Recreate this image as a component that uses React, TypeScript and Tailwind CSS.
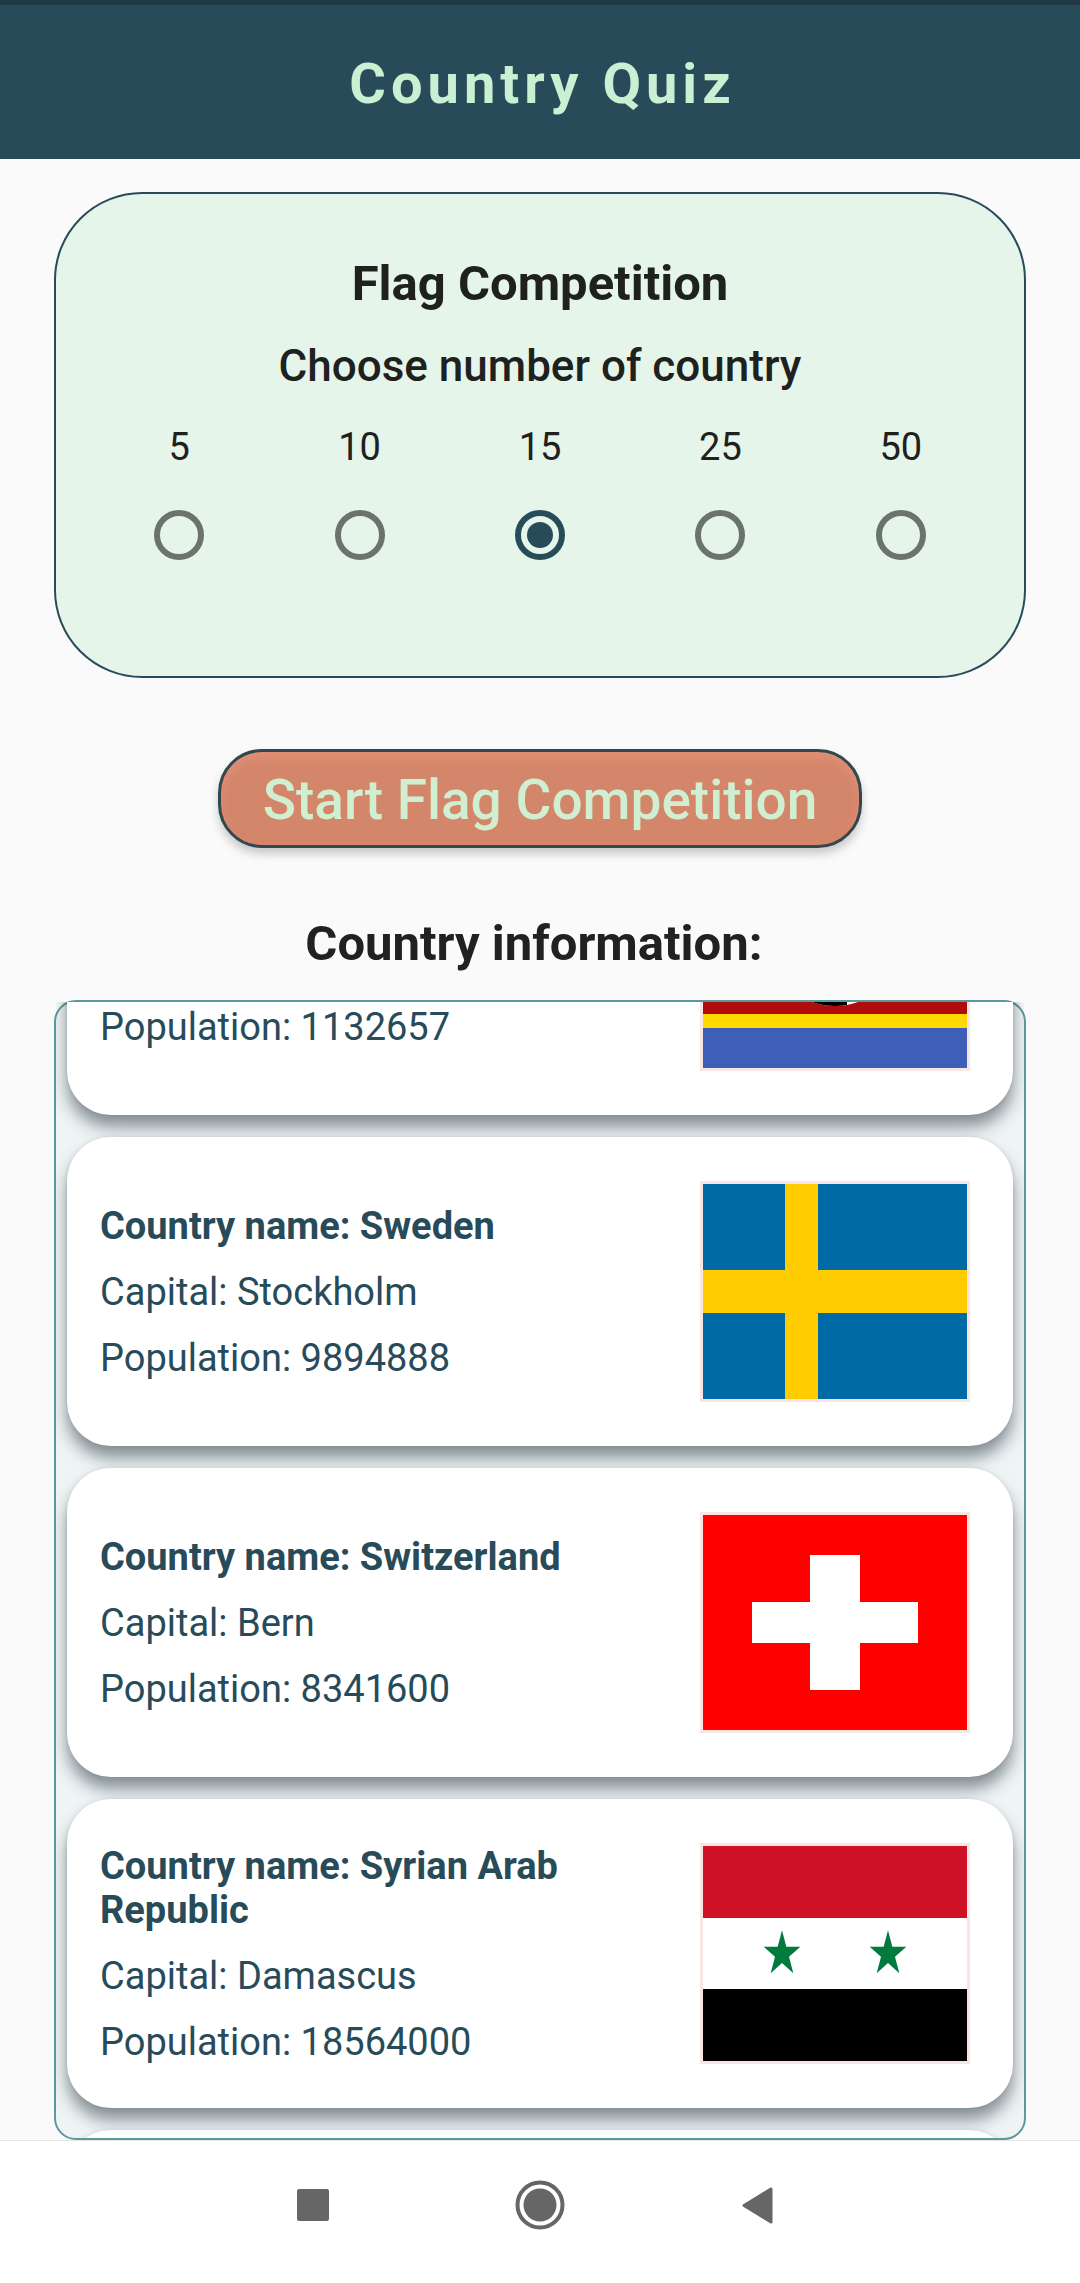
import { useLayoutEffect, useRef, useState, type ReactNode } from "react";

const COUNTS = [5, 10, 15, 25, 50];

type Country = { name: string; capital: string; population: number; flag: ReactNode };

// Five-pointed star stretched to the given horizontal and vertical radii.
function starPoints(cx: number, cy: number, rx: number, ry: number) {
  return Array.from({ length: 10 }, (_, i) => {
    const k = i % 2 === 0 ? 1 : 0.382;
    const a = (Math.PI / 5) * i;
    return `${(cx + Math.sin(a) * rx * k).toFixed(2)},${(cy - Math.cos(a) * ry * k).toFixed(2)}`;
  }).join(" ");
}

const COUNTRIES: Country[] = [
  {
    name: "Swaziland",
    capital: "Mbabane",
    population: 1132657,
    flag: (
      <>
        <rect width="264" height="215" fill="#3e5eb9" />
        <rect y="40" width="264" height="135" fill="#ffd900" />
        <rect y="54" width="264" height="107" fill="#b10c0c" />
        <ellipse cx="132" cy="107" rx="56" ry="46" fill="#fff" />
        <path d="M144 62 V152 Q138 153 132 153 A56 46 0 0 1 132 61 Z" fill="#000" />
      </>
    ),
  },
  {
    name: "Sweden",
    capital: "Stockholm",
    population: 9894888,
    flag: (
      <>
        <rect width="264" height="215" fill="#006aa7" />
        <rect x="82" width="33" height="215" fill="#fecc00" />
        <rect y="86" width="264" height="43" fill="#fecc00" />
      </>
    ),
  },
  {
    name: "Switzerland",
    capital: "Bern",
    population: 8341600,
    flag: (
      <>
        <rect width="264" height="215" fill="#ff0000" />
        <rect x="49" y="87" width="166" height="41" fill="#fff" />
        <rect x="107" y="40" width="50" height="135" fill="#fff" />
      </>
    ),
  },
  {
    name: "Syrian Arab Republic",
    capital: "Damascus",
    population: 18564000,
    flag: (
      <>
        <rect width="264" height="215" fill="#fff" />
        <rect width="264" height="72" fill="#ce1126" />
        <rect y="143" width="264" height="72" fill="#000" />
        <polygon points={starPoints(79, 108, 19.3, 23.7)} fill="#007a3d" />
        <polygon points={starPoints(185, 108, 19.3, 23.7)} fill="#007a3d" />
      </>
    ),
  },
  {
    name: "Tajikistan",
    capital: "Dushanbe",
    population: 8593600,
    flag: (
      <>
        <rect width="264" height="215" fill="#fff" />
        <rect width="264" height="61" fill="#cc0000" />
        <rect y="154" width="264" height="61" fill="#006600" />
      </>
    ),
  },
];

function CountryCard({ name, capital, population, flag }: Country) {
  return (
    <li className="flex h-[309px] shrink-0 items-center justify-between rounded-[44px] bg-white pr-[43px] pl-[33px] text-[38px] leading-[44px] text-[#284b5a] shadow-[0_12px_16px_rgba(30,45,55,0.5),0_0_4px_rgba(0,0,0,0.08)]">
      <div className="flex flex-1 flex-col gap-[22px]">
        <h3 className="font-bold">Country name: {name}</h3>
        <p>Capital: {capital}</p>
        <p>Population: {population}</p>
      </div>
      <svg
        viewBox="0 0 264 215"
        preserveAspectRatio="none"
        className="h-[221px] w-[270px] shrink-0 border-3 border-[#f7e6e2]"
        role="img"
        aria-label={`Flag of ${name}`}
      >
        {flag}
      </svg>
    </li>
  );
}

export default function App() {
  const [count, setCount] = useState(15);
  const listRef = useRef<HTMLUListElement>(null);

  useLayoutEffect(() => {
    if (listRef.current) listRef.current.scrollTop = 207;
  }, []);

  return (
    <div className="flex h-screen flex-col bg-[#fafafa] font-[Roboto,sans-serif] text-[#212121]">
      <header className="flex h-[159px] shrink-0 items-center justify-center border-t-5 border-[#1f3843] bg-[#284b5a] pt-1 pl-[5px]">
        <h1 className="text-[56px] leading-[64px] font-bold tracking-[5px] text-[#c9f0d3]">
          Country Quiz
        </h1>
      </header>

      <main className="flex min-h-0 flex-1 flex-col px-[54px] pt-[33px]">
        <section className="flex shrink-0 flex-col items-center rounded-[88px] border-2 border-[#284b5a] bg-[#e5f5ea] px-[33px] pt-[60px] pb-[116px] text-[#1e211e]">
          <h2 className="text-[49px] leading-[60px] font-bold">Flag Competition</h2>
          <fieldset className="mt-[26px] w-full">
            <legend className="w-full text-center text-[44px] leading-[52px] font-medium">
              Choose number of country
            </legend>
            <div className="mt-[33px] grid grid-cols-5">
              {COUNTS.map((n) => (
                <label
                  key={n}
                  className="flex flex-col items-center gap-[41px] text-[38px] leading-[44px]"
                >
                  {n}
                  <input
                    type="radio"
                    name="count"
                    value={n}
                    checked={count === n}
                    onChange={() => setCount(n)}
                    className="grid size-[50px] appearance-none place-items-center rounded-full border-6 border-[#6b736d] checked:border-[#284b5a] checked:before:size-[26px] checked:before:rounded-full checked:before:bg-[#284b5a]"
                  />
                </label>
              ))}
            </div>
          </fieldset>
        </section>

        <button
          type="button"
          className="mt-[71px] h-[99px] shrink-0 self-center rounded-[44px] border-3 border-[#32474f] bg-[#d4866a] px-[42px] pt-[3px] text-[55px] leading-[64px] font-medium text-[#d0eed0] shadow-[0_6px_10px_rgba(0,0,0,0.2),inset_0_6px_10px_rgba(228,148,122,0.7)]"
        >
          Start Flag Competition
        </button>

        <h2 className="mt-[66px] shrink-0 text-center text-[49px] leading-[60px] font-bold whitespace-pre">
          {"Country information:\u00a0"}
        </h2>

        <section className="mt-[26px] flex min-h-0 flex-1 flex-col rounded-[22px] border-2 border-[#5a9a9c] bg-[#eff4f5]">
          <ul
            ref={listRef}
            className="flex min-h-0 flex-1 flex-col gap-[22px] overflow-y-auto p-[11px] [scrollbar-width:none]"
          >
            {COUNTRIES.map((c) => (
              <CountryCard key={c.name} {...c} />
            ))}
          </ul>
        </section>
      </main>

      <nav className="flex h-[143px] shrink-0 items-center justify-center gap-[176px] border-t border-[#e6e6e6] bg-white pb-[15px] text-[#666666]">
        <button type="button" aria-label="Recent apps">
          <svg viewBox="0 0 50 50" className="size-[50px]" fill="currentColor">
            <rect x="8" y="9" width="32" height="32" rx="2" />
          </svg>
        </button>
        <button type="button" aria-label="Home">
          <svg viewBox="0 0 50 50" className="size-[50px]" fill="currentColor">
            <circle cx="25" cy="25" r="22.5" fill="none" stroke="currentColor" strokeWidth="4" />
            <circle cx="25" cy="25" r="16.5" />
          </svg>
        </button>
        <button type="button" aria-label="Back">
          <svg viewBox="0 0 50 50" className="size-[50px]" fill="currentColor">
            <path
              d="M3 25.5 L30 9 V42 Z"
              stroke="currentColor"
              strokeWidth="3"
              strokeLinejoin="round"
            />
          </svg>
        </button>
      </nav>
    </div>
  );
}
